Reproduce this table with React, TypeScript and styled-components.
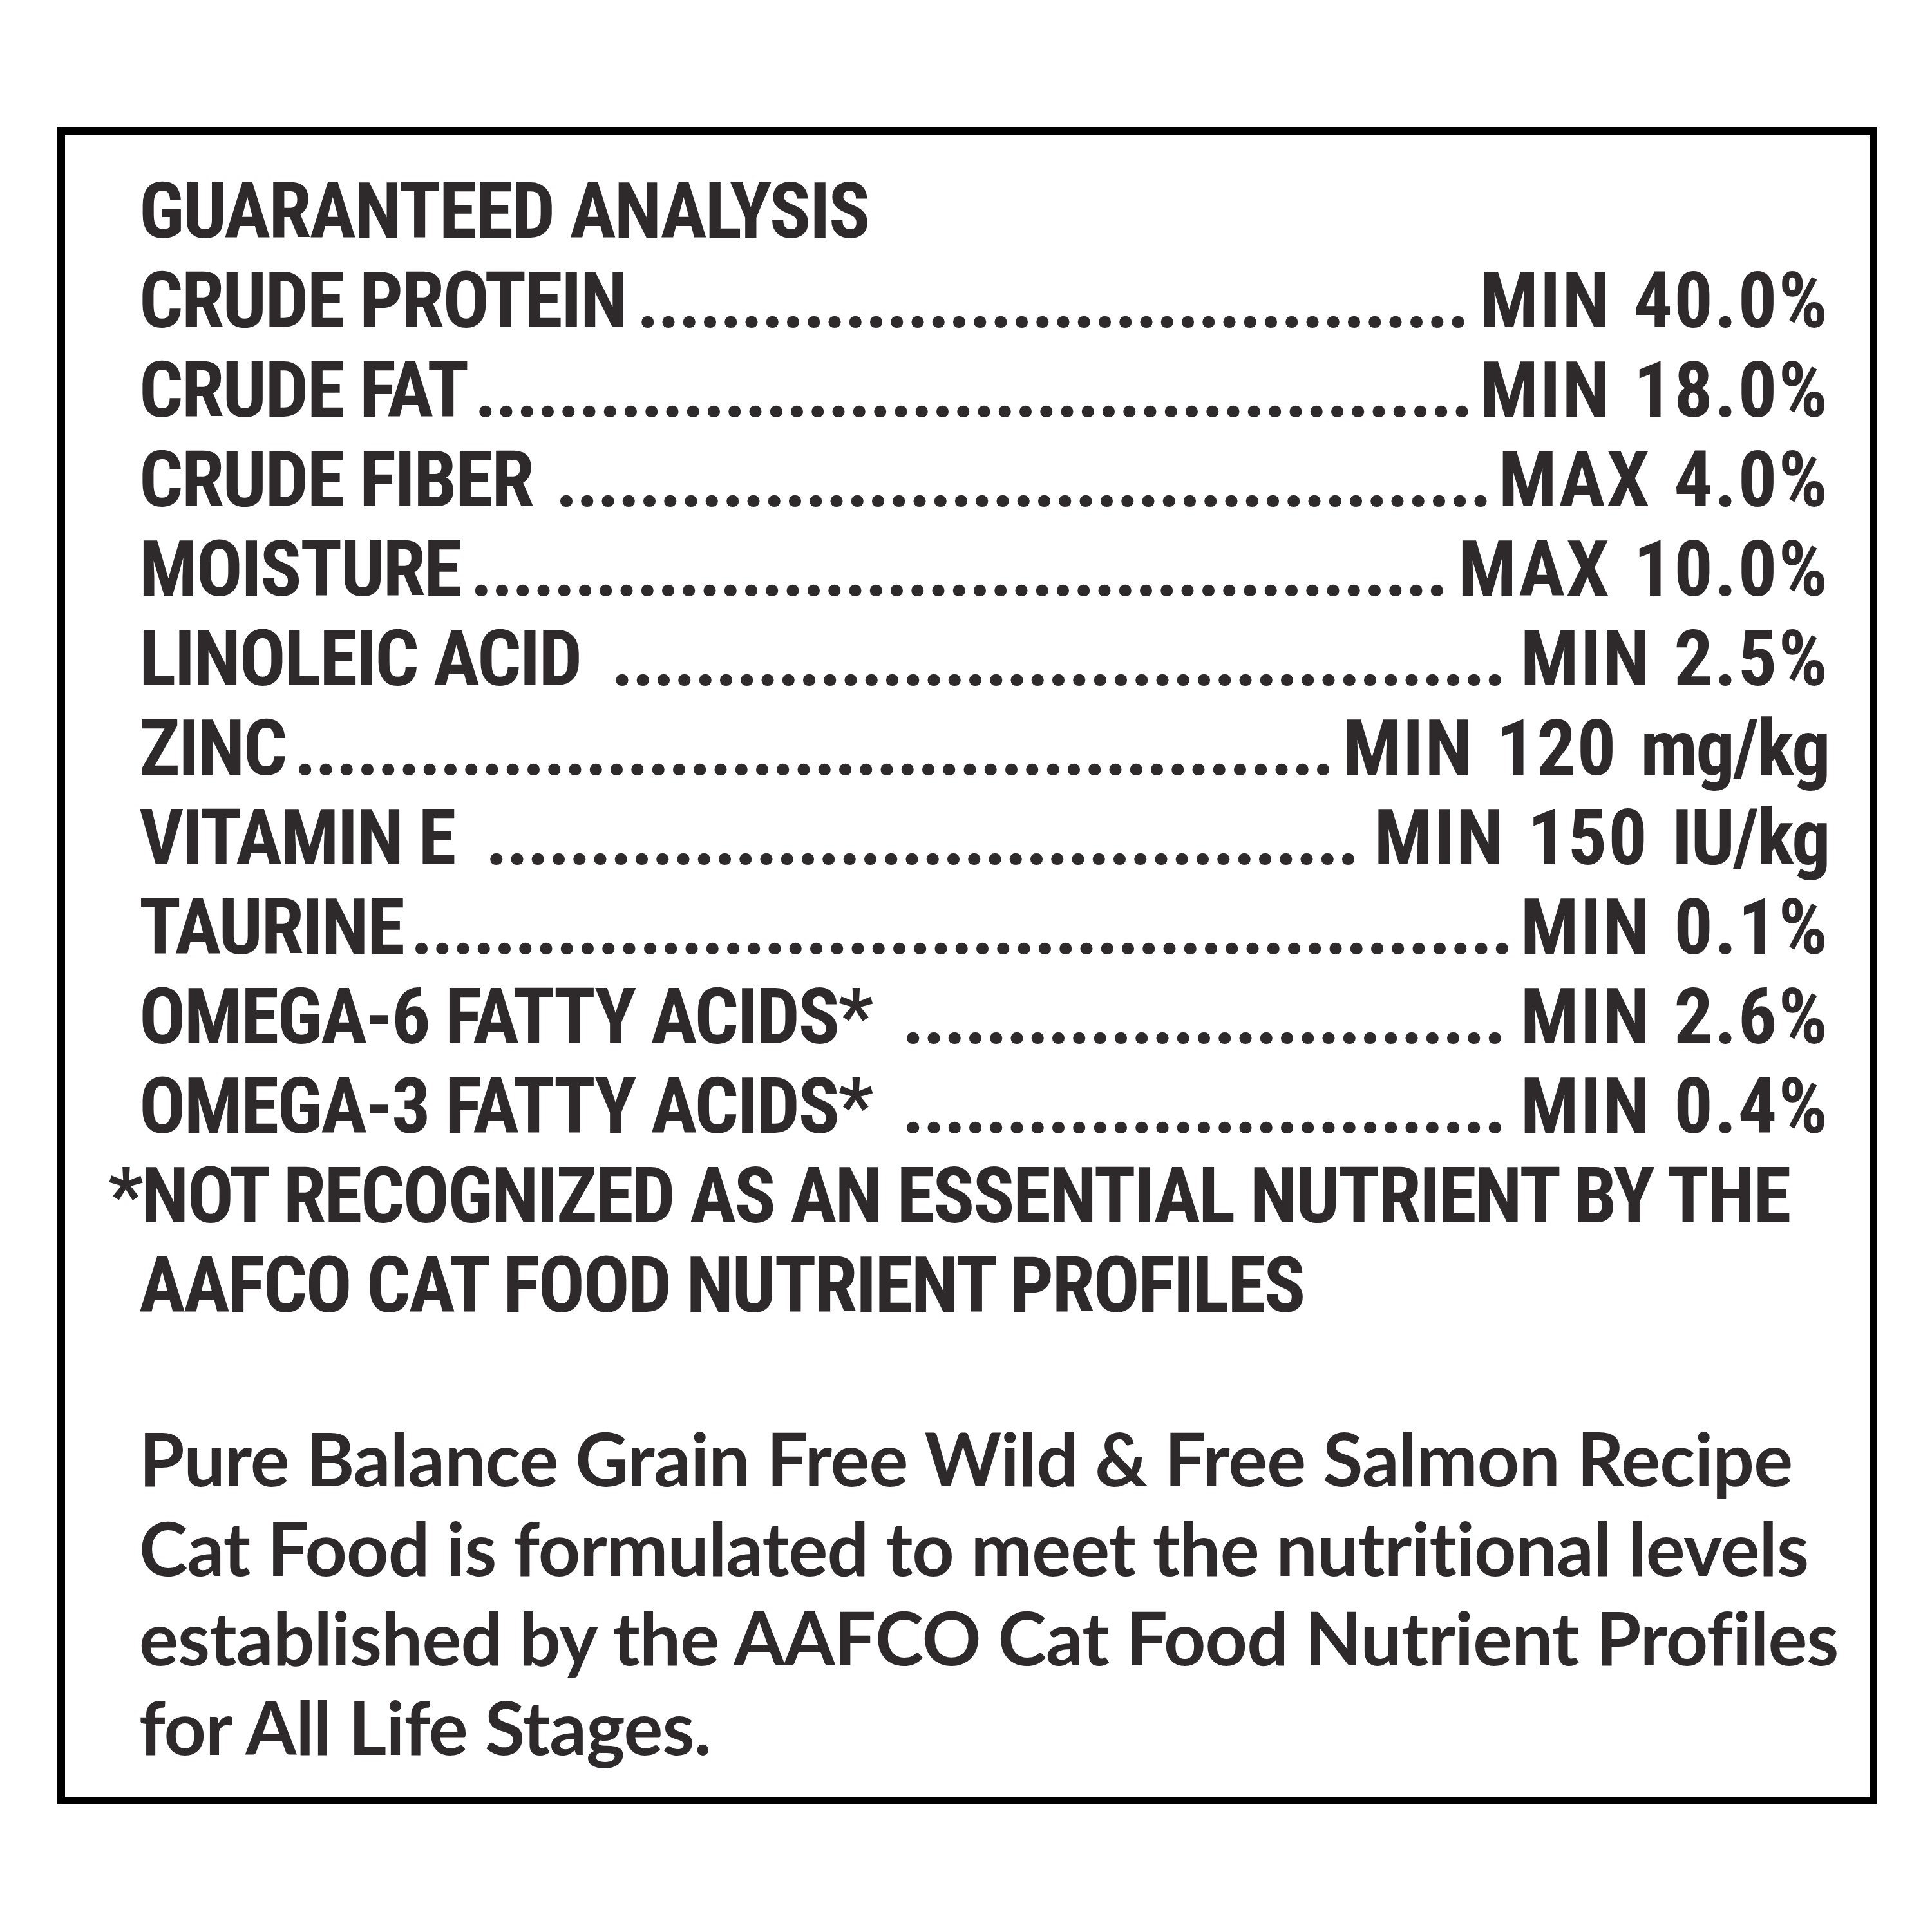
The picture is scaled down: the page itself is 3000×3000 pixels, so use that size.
import React, { useLayoutEffect, useRef, useState } from "react";
import styled, { createGlobalStyle } from "styled-components";

const GlobalStyle = createGlobalStyle`
  html, body {
    margin: 0;
    padding: 0;
    background: #ffffff;
  }
`;

const INK = "#2e2a2b";

const Page = styled.div`
  padding: 197px 0 0 89px;
`;

const Panel = styled.section`
  box-sizing: border-box;
  width: 2826px;
  height: 2605px;
  border: 12px solid #000000;
  padding: 50px 63px 0 115px;
  color: ${INK};
  background: #ffffff;
`;

const Analysis = styled.div`
  font-family: "Roboto", "Liberation Sans", sans-serif;
  font-stretch: 75%;
  font-weight: 700;
  font-size: 120px;
  line-height: 139px;
  letter-spacing: -2.6px;
`;

const Title = styled.h1`
  margin: 0;
  font: inherit;
  white-space: nowrap;
`;

const Row = styled.div`
  display: flex;
  align-items: flex-start;
  height: 139px;
`;

const Label = styled.span`
  flex: none;
  white-space: pre;
`;

const LeaderTrack = styled.span`
  box-sizing: border-box;
  flex: 1 1 0;
  min-width: 0;
  padding: 0 10px 0 8px;
  white-space: nowrap;
  text-align: center;
`;

const Dots = styled.span`
  white-space: nowrap;
`;

const Value = styled.span`
  flex: none;
  white-space: pre;
  letter-spacing: 2px;
  word-spacing: 6px;
`;

const Unit = styled.span`
  letter-spacing: -2.6px;
`;

const Footnote = styled.p`
  margin: 0;
  text-indent: -48px;
  white-space: nowrap;
`;

const Statement = styled.p`
  margin: 128px 0 0;
  font-family: "Lato", "Liberation Sans", sans-serif;
  font-weight: 700;
  font-size: 114px;
  line-height: 139px;
  letter-spacing: -0.9px;
  white-space: nowrap;
`;

function Leader() {
  const trackRef = useRef<HTMLSpanElement>(null);
  const dotsRef = useRef<HTMLSpanElement>(null);
  const [count, setCount] = useState(1);

  useLayoutEffect(() => {
    let cancelled = false;
    const measure = () => {
      const track = trackRef.current;
      const dots = dotsRef.current;
      if (!track || !dots || cancelled) return;
      const one = dots.getBoundingClientRect().width / Math.max(1, dots.textContent?.length || 1);
      const style = getComputedStyle(track);
      const avail =
        track.clientWidth - parseFloat(style.paddingLeft) - parseFloat(style.paddingRight);
      if (one > 0) setCount(Math.max(0, Math.floor(avail / one)));
    };
    document.fonts.ready.then(() => {
      setCount(1);
      requestAnimationFrame(measure);
    });
    return () => {
      cancelled = true;
    };
  }, []);

  return (
    <LeaderTrack ref={trackRef}>
      <Dots ref={dotsRef}>{".".repeat(count)}</Dots>
    </LeaderTrack>
  );
}

type Item = { label: string; value: string; unit?: string };

const items: Item[] = [
  { label: "CRUDE PROTEIN", value: "MIN 40.0%" },
  { label: "CRUDE FAT", value: "MIN 18.0%" },
  { label: "CRUDE FIBER ", value: "MAX 4.0%" },
  { label: "MOISTURE", value: "MAX 10.0%" },
  { label: "LINOLEIC ACID ", value: "MIN 2.5%" },
  { label: "ZINC", value: "MIN 120 ", unit: "mg/kg" },
  { label: "VITAMIN E ", value: "MIN 150 ", unit: "IU/kg" },
  { label: "TAURINE", value: "MIN 0.1%" },
  { label: "OMEGA-6 FATTY ACIDS* ", value: "MIN 2.6%" },
  { label: "OMEGA-3 FATTY ACIDS* ", value: "MIN 0.4%" },
];

export default function App() {
  return (
    <>
      <GlobalStyle />
      <Page>
        <Panel>
          <Analysis>
            <Title>GUARANTEED ANALYSIS</Title>
            {items.map((it) => (
              <Row key={it.label}>
                <Label>{it.label}</Label>
                <Leader />
                <Value>
                  {it.value}
                  {it.unit && <Unit>{it.unit}</Unit>}
                </Value>
              </Row>
            ))}
            <Footnote>
              *NOT RECOGNIZED AS AN ESSENTIAL NUTRIENT BY THE
              <br />
              AAFCO CAT FOOD NUTRIENT PROFILES
            </Footnote>
          </Analysis>
          <Statement>
            Pure Balance Grain Free Wild &amp; Free Salmon Recipe
            <br />
            Cat Food is formulated to meet the nutritional levels
            <br />
            established by the AAFCO Cat Food Nutrient Profiles
            <br />
            for All Life Stages.
          </Statement>
        </Panel>
      </Page>
    </>
  );
}
